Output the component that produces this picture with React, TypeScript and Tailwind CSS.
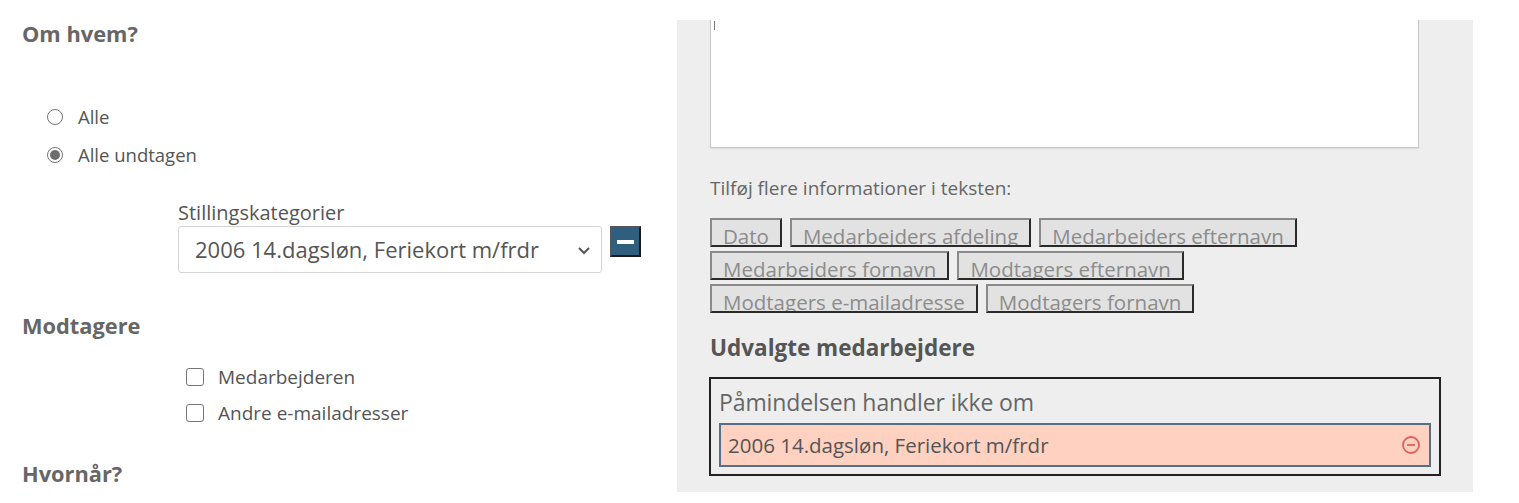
import React from 'react';

const tags = [
  ['Dato', 'Medarbejders afdeling', 'Medarbejders efternavn'],
  ['Medarbejders fornavn', 'Modtagers efternavn'],
  ['Modtagers e-mailadresse', 'Modtagers fornavn'],
];

function Radio({ checked, label }: { checked?: boolean; label: string }) {
  return (
    <div className="flex items-center h-[38px]">
      <span className="w-[16px] h-[16px] rounded-full border border-[#767676] bg-white flex items-center justify-center">
        {checked && <span className="w-[10px] h-[10px] rounded-full bg-[#6e6e6e]" />}
      </span>
      <span className="ml-[15px] text-[18.5px] text-[#555]">{label}</span>
    </div>
  );
}

function Check({ label }: { label: string }) {
  return (
    <div className="flex items-center h-[36px]">
      <span className="w-[18px] h-[18px] rounded-[3px] border border-[#767676] bg-white" />
      <span className="ml-[14px] text-[19px] text-[#555]">{label}</span>
    </div>
  );
}

export default function App() {
  return (
    <div className="w-[1519px] h-[503px] bg-white flex font-['Open_Sans',sans-serif] overflow-hidden">
      {/* venstre kolonne */}
      <div className="w-[677px] pl-[22px] flex flex-col">
        <div className="mt-[20px] h-[28px] leading-[28px] text-[21.8px] font-bold text-[#666]">Om hvem?</div>
        <div className="mt-[50px] pl-[25px]">
          <Radio label="Alle" />
          <Radio checked label="Alle undtagen" />
        </div>
        <div className="mt-[26px] ml-[156px] flex flex-col">
          <div className="h-[26px] leading-[26px] text-[20px] text-[#555]">Stillingskategorier</div>
          <div className="flex items-start mt-[0px]">
            <div className="w-[424px] h-[47px] border border-[#d4d4d4] rounded-[3px] bg-white flex items-center pl-[16px] pr-[10px]">
              <span className="flex-1 text-[22px] text-[#555]">2006 14.dagsløn, Feriekort m/frdr</span>
              <svg width="14" height="14" viewBox="0 0 14 14" fill="none" stroke="#555" strokeWidth="2">
                <path d="M2 5l5 5 5-5" />
              </svg>
            </div>
            <div className="ml-[8px] w-[31px] h-[31px] bg-[#2f5f7e] border-2 border-t-[#555] border-l-[#555] border-r-[#1a1a1a] border-b-[#1a1a1a] flex items-center justify-center">
              <span className="w-[17px] h-[4px] bg-white" />
            </div>
          </div>
        </div>
        <div className="mt-[39px] h-[28px] leading-[28px] text-[21.8px] font-bold text-[#666]">Modtagere</div>
        <div className="mt-[19px] ml-[164px]">
          <Check label="Medarbejderen" />
          <Check label="Andre e-mailadresser" />
        </div>
        <div className="mt-[29px] h-[28px] leading-[28px] text-[21.8px] font-bold text-[#666]">Hvornår?</div>
      </div>

      {/* højre panel */}
      <div className="mt-[20px] w-[796px] h-[472px] bg-[#eeeeee] pl-[33px] flex flex-col">
        <div className="w-[709px] h-[128px] bg-white border border-t-0 border-[#c9c9c9] shadow-[0_1px_1px_rgba(0,0,0,0.08)] relative">
          <span className="absolute left-[3px] top-[1px] w-[1px] h-[9px] bg-[#777]" />
        </div>
        <div className="mt-[29px] h-[22px] leading-[22px] text-[19px] text-[#666]">Tilføj flere informationer i teksten:</div>
        <div className="mt-[19px] flex flex-col gap-[4px]">
          {tags.map((row, i) => (
            <div key={i} className="flex gap-[8px]">
              {row.map(t => (
                <div
                  key={t}
                  className="h-[29px] px-[11px] bg-[#e2e2e2] border-2 border-t-[#8a8a8a] border-l-[#8a8a8a] border-r-[#2a2a2a] border-b-[#2a2a2a] overflow-hidden text-[20.5px] leading-[32px] text-[#8c8c8c] whitespace-nowrap"
                >
                  {t}
                </div>
              ))}
            </div>
          ))}
        </div>
        <div className="mt-[20px] h-[30px] leading-[30px] text-[22.5px] font-bold text-[#555]">Udvalgte medarbejdere</div>
        <div className="mt-[14px] -ml-[1px] w-[732px] h-[99px] border-2 border-[#222] px-[8px] flex flex-col">
          <div className="mt-[11px] h-[24px] leading-[24px] text-[23px] text-[#666] tracking-[-0.1px]">Påmindelsen handler ikke om</div>
          <div className="mt-[9px] h-[44px] bg-[#ffd1c1] border-2 border-[#56708a] flex items-center pl-[7px] pr-[8px]">
            <span className="flex-1 text-[20.5px] text-[#555]">2006 14.dagsløn, Feriekort m/frdr</span>
            <svg width="20" height="20" viewBox="0 0 20 20" fill="none" stroke="#e0605e" strokeWidth="1.8">
              <circle cx="10" cy="10" r="8" />
              <path d="M6 10h8" />
            </svg>
          </div>
        </div>
      </div>
    </div>
  );
}
